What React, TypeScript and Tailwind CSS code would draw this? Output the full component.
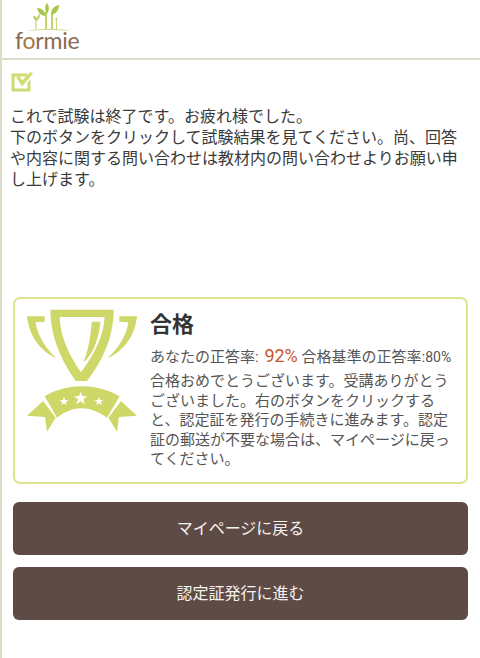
const jp = "font-['Roboto','Noto_Sans_CJK_JP',sans-serif]";

function Logo() {
  return (
    <div className="flex flex-col items-start">
      <svg width="64" height="32" viewBox="15 3 64 32" className="block">
        <path d="M26 31c14-3 34-3 44 0c-14-1.5-30-1.5-44 0z" fill="#d5dc9a" />
        <path d="M45 29V12h2v17zM51 29V12h2v17z" fill="#c0d46a" />
        <path d="M47 3c2.5 3 2.5 7 0 11c-2.5-4-2.5-8 0-11z" fill="#a9c84a" />
        <path d="M37 8c5 0 8 3 9 8c-5 0-8-3-9-8z" fill="#a9c84a" />
        <path d="M59 5c-5 1-8 4-8 10c5-1 8-5 8-10z" fill="#a9c84a" />
        <path d="M33 16c3 0 4.5 2 5 5c-3 0-4.5-2-5-5z" fill="#b7d05a" />
        <path d="M40 14c-2 1-3 3-3 6c2-1 3-3 3-6z" fill="#b7d05a" />
        <path d="M35 21v9h1.5v-9z" fill="#d3df94" />
        <path d="M56 18v12h1v-12z" fill="#c7d87a" />
        <circle cx="56.5" cy="19" r="1.2" fill="#c7d87a" />
      </svg>
      <div className="-mt-[8px] text-[23px] leading-[26px] tracking-[-0.2px] font-['Lato',sans-serif] text-[#8a6a50]">
        f<span className="text-[#a5793f]">o</span>rmie
      </div>
    </div>
  );
}

function CheckMark() {
  return (
    <svg width="24" height="22" viewBox="0 0 24 22" className="block">
      <path d="M1.5 3.5h16v3h-13v12h13v-6l3-3v12h-19z" fill="#cfdc72" />
      <path d="M6 7l3.5-1l2.5 4.5l8.5-8.500l2.5 1.500l-11 13z" fill="#cfdc72" />
    </svg>
  );
}

function Trophy() {
  return (
    <svg width="112" height="124" viewBox="50 60 334 372" className="block">
      <g fill="#cdd868">
        <path
          clipRule="evenodd"
          fillRule="evenodd"
          d="M122 62H312C312 130 290 200 232 276H198C145 200 122 130 122 62ZM150 84C152 140 175 195 214 250C255 195 282 140 285 84Z"
        />
        <path d="M246 98H272C268 150 250 195 222 220C236 180 244 140 246 98Z" />
        <path d="M52 82H105V98L78 100C84 140 105 175 140 208C90 185 58 140 52 82Z" />
        <path d="M382 82H329V98L356 100C350 140 329 175 294 208C344 185 376 140 382 82Z" />
        <path d="M105 322C170 282 262 282 330 322L292 386C240 348 190 348 142 386Z" />
        <path d="M100 336L52 380L106 384L112 428L138 386Z" />
        <path d="M334 336L382 380L328 384L322 428L296 386Z" />
      </g>
      <g fill="#fff">
        <path d="M163 324l3.5 9h10l-8 6l3 10l-8.500-6l-8.500 6l3-10l-8-6h10z" />
        <path d="M213 308l5 14h15l-12 9l5 15l-13-9l-13 9l5-15l-12-9h15z" />
        <path d="M268 324l3.5 9h10l-8 6l3 10l-8.500-6l-8.500 6l3-10l-8-6h10z" />
      </g>
    </svg>
  );
}

export default function App() {
  return (
    <div className={`w-[480px] h-[658px] bg-white border-l-2 border-[#dcdccb] overflow-hidden text-[#3a3a3a] ${jp}`}>
      <header className="h-[60px] border-b-2 border-[#dcdccb] pl-[13px] pt-[3px]">
        <Logo />
      </header>
      <main className="px-[11px]">
        <div className="mt-[10px] -ml-[3px]">
          <CheckMark />
        </div>
        <p className="mt-[14px] -ml-[3px] w-[458px] text-[16px] leading-[21px]">
          これで試験は終了です。お疲れ様でした。
          <br />
          下のボタンをクリックして試験結果を見てください。尚、回答や内容に関する問い合わせは教材内の問い合わせよりお願い申し上げます。
        </p>
        <section className="mt-[107px] h-[187px] w-[455px] rounded-[7px] border-2 border-[#dde38f] flex">
          <div className="w-[135px] shrink-0 pl-[11px] pt-[10px]">
            <Trophy />
          </div>
          <div className="flex-1 pt-[11px] pr-[14px]">
            <h2 className="text-[22px] leading-[30px] font-bold text-[#333]">合格</h2>
            <p className="mt-[5px] text-[15px] leading-[22px] whitespace-nowrap text-[#555]">
              あなたの正答率:{" "}
              <span className="ml-[2px] text-[18px] leading-[22px] text-[#c8562a]">92%</span> 合格基準の正答率:
              <span className="text-[14px] leading-[22px]">80%</span>
            </p>
            <p className="mt-[4px] text-[15px] leading-[19.5px] text-[#555]">
              合格おめでとうございます。受講ありがとうございました。右のボタンをクリックすると、認定証を発行の手続きに進みます。認定証の郵送が不要な場合は、マイページに戻ってください。
            </p>
          </div>
        </section>
        <div className="mt-[18px] flex flex-col gap-[12px] w-[455px]">
          <button className="h-[53px] rounded-[6px] bg-[#5f4b45] text-[16px] text-[#f5f2f0]">マイページに戻る</button>
          <button className="h-[53px] rounded-[6px] bg-[#5f4b45] text-[16px] text-[#f5f2f0]">認定証発行に進む</button>
        </div>
      </main>
    </div>
  );
}
